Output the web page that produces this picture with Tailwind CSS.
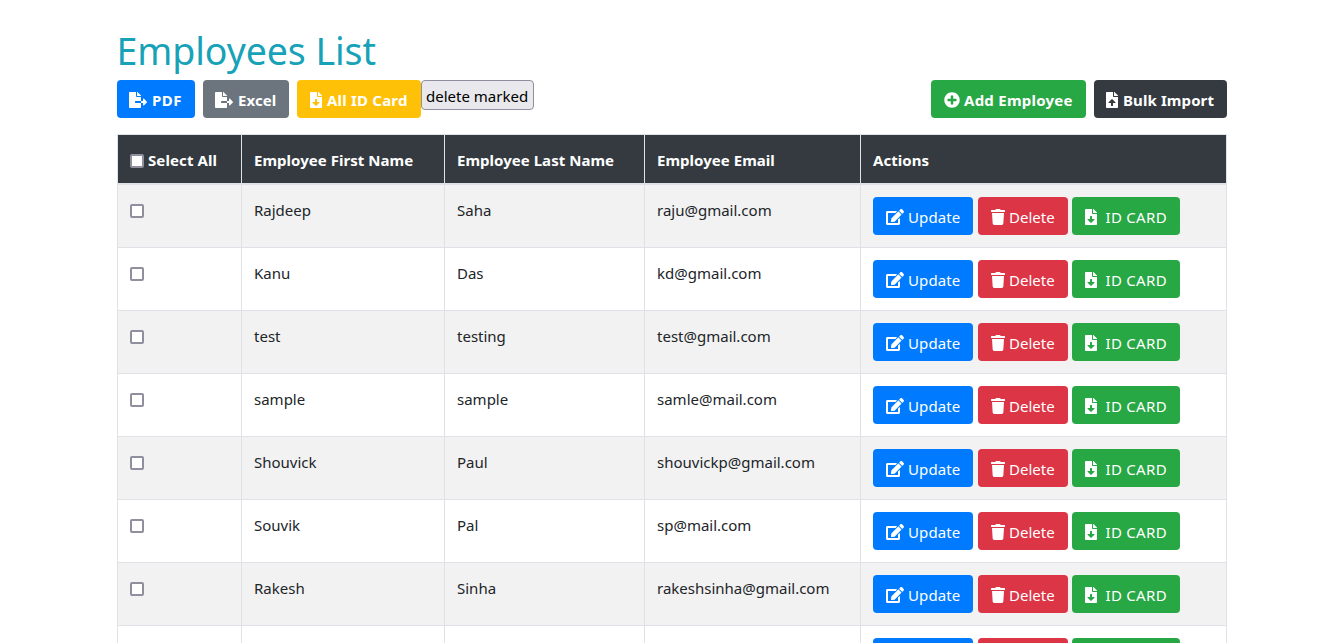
<!DOCTYPE html>
<html lang="en">
<head>
<meta charset="utf-8">
<title>Employees List</title>
<script src="https://cdn.jsdelivr.net/npm/@tailwindcss/browser@4"></script>
</head>
<body class="h-[643px] overflow-hidden bg-white font-['Noto_Sans',sans-serif] text-[15px] leading-6 text-[#212529]">
<svg class="hidden">
  <symbol id="export" viewBox="0 0 576 512"><path d="M384 121.9c0-6.3-2.5-12.4-7-16.9L279.1 7c-4.5-4.5-10.6-7-17-7H256v128h128zM571 308l-95.7-96.4c-10.1-10.1-27.4-3-27.4 11.3V288h-64v64h64v65.2c0 14.3 17.3 21.4 27.4 11.3L571 332c6.6-6.6 6.6-17.4 0-24zm-379 28v-32c0-8.8 7.2-16 16-16h176V160H248c-13.2 0-24-10.8-24-24V0H24C10.7 0 0 10.7 0 24v464c0 13.3 10.7 24 24 24h336c13.3 0 24-10.7 24-24V352H208c-8.8 0-16-7.2-16-16z"/></symbol>
  <symbol id="download" viewBox="0 0 384 512"><path d="M224 136V0H24C10.7 0 0 10.7 0 24v464c0 13.3 10.7 24 24 24h336c13.3 0 24-10.7 24-24V160H248c-13.2 0-24-10.8-24-24zm76.45 211.36l-96.42 95.7c-6.65 6.61-17.39 6.61-24.04 0l-96.42-95.7C73.42 337.29 80.54 320 94.82 320H160v-80c0-8.84 7.16-16 16-16h32c8.84 0 16 7.16 16 16v80h65.18c14.28 0 21.4 17.29 11.27 27.36zM377 105L279.1 7c-4.5-4.5-10.6-7-17-7H256v128h128v-6.1c0-6.3-2.5-12.4-7-16.9z"/></symbol>
  <symbol id="upload" viewBox="0 0 384 512"><path d="M224 136V0H24C10.7 0 0 10.7 0 24v464c0 13.3 10.7 24 24 24h336c13.3 0 24-10.7 24-24V160H248c-13.2 0-24-10.8-24-24zm65.18 216.01H224v80c0 8.84-7.16 16-16 16h-32c-8.84 0-16-7.16-16-16v-80H94.82c-14.28 0-21.41-17.29-11.27-27.36l96.42-95.7c6.65-6.61 17.39-6.61 24.04 0l96.42 95.7c10.15 10.07 3.03 27.36-11.25 27.36zM377 105L279.1 7c-4.5-4.5-10.6-7-17-7H256v128h128v-6.1c0-6.3-2.5-12.4-7-16.9z"/></symbol>
  <symbol id="plus" viewBox="0 0 512 512"><path d="M256 8C119 8 8 119 8 256s111 248 248 248 248-111 248-248S393 8 256 8zm144 276c0 6.6-5.4 12-12 12h-92v92c0 6.6-5.4 12-12 12h-56c-6.6 0-12-5.4-12-12v-92h-92c-6.6 0-12-5.4-12-12v-56c0-6.6 5.4-12 12-12h92v-92c0-6.6 5.4-12 12-12h56c6.6 0 12 5.4 12 12v92h92c6.6 0 12 5.4 12 12v56z"/></symbol>
  <symbol id="edit" viewBox="0 0 576 512"><path d="M402.6 83.2l90.2 90.2c3.8 3.8 3.8 10 0 13.8L274.4 405.6l-92.8 10.3c-12.4 1.4-22.9-9.1-21.5-21.5l10.3-92.8L388.8 83.2c3.8-3.8 10-3.8 13.8 0zm162-22.9l-48.8-48.8c-15.2-15.2-39.9-15.2-55.2 0l-35.4 35.4c-3.8 3.8-3.8 10 0 13.8l90.2 90.2c3.8 3.8 10 3.8 13.8 0l35.4-35.4c15.2-15.3 15.2-40 0-55.2zM384 346.2V448H64V128h229.8c3.2 0 6.2-1.3 8.5-3.5l40-40c7.6-7.6 2.2-20.5-8.5-20.5H48C21.5 64 0 85.5 0 112v352c0 26.5 21.5 48 48 48h352c26.5 0 48-21.5 48-48V306.2c0-10.7-12.9-16-20.5-8.5l-40 40c-2.2 2.3-3.5 5.3-3.5 8.5z"/></symbol>
  <symbol id="trash" viewBox="0 0 448 512"><path d="M432 32H312l-9.4-18.7A24 24 0 0 0 281.1 0H166.8a23.72 23.72 0 0 0-21.4 13.3L136 32H16A16 16 0 0 0 0 48v32a16 16 0 0 0 16 16h416a16 16 0 0 0 16-16V48a16 16 0 0 0-16-16zM53.2 467a48 48 0 0 0 47.9 45h245.8a48 48 0 0 0 47.9-45L416 128H32z"/></symbol>
</svg>

<main class="ml-[117px] w-[1110px] pt-[27px]">
  <h2 class="-ml-[0.5px] mb-[5px] h-12 text-[37.5px] leading-12 tracking-[-0.08px] text-[#17a2b8]">Employees List</h2>
  <div class="mb-4 flex h-[38px] items-start font-bold whitespace-nowrap text-white [&>a]:flex [&>a]:h-[38px] [&>a]:items-start [&>a]:rounded [&>a]:pt-2 [&_svg]:mt-1 [&_svg]:h-4 [&_svg]:fill-current">
    <a class="mr-2 w-[78px] bg-[#007bff] pl-3"><svg class="mr-[5px] w-[18px]"><use href="#export"/></svg><span class="tracking-[0.5px]">PDF</span></a>
    <a class="mr-2 w-[86px] bg-[#6c757d] pl-3"><svg class="mr-[5px] w-[18px]"><use href="#export"/></svg><span class="tracking-[0.1px]">Excel</span></a>
    <a class="w-[124px] bg-[#ffc107] pl-[13px]"><svg class="mr-[5px] w-3"><use href="#download"/></svg><span class="tracking-[0.2px]">All ID Card</span></a>
    <button class="h-[30px] w-[113px] rounded border border-[#8f8f9d] bg-[#e9e9ed] pt-px pl-1 text-left font-normal text-black"><span class="block leading-6">delete marked</span></button>
    <a class="mr-2 ml-auto w-[155px] bg-[#28a745] pl-[13px]"><svg class="mr-1 w-4"><use href="#plus"/></svg><span class="tracking-[0.25px]">Add Employee</span></a>
    <a class="w-[133px] bg-[#343a40] pl-3"><svg class="mr-[5px] w-3"><use href="#upload"/></svg><span class="tracking-[0.1px]">Bulk Import</span></a>
  </div>
  <table class="w-[1110px] table-fixed border-separate border-spacing-0 border-t border-l border-[#dee2e6]">
    <colgroup><col class="w-[124px]"><col class="w-[203px]"><col class="w-[200px]"><col class="w-[216px]"><col class="w-[366px]"></colgroup>
    <thead>
      <tr class="h-[50px] bg-[#343a40] text-left tracking-[0.03px] whitespace-nowrap text-white [&>th]:border-r [&>th]:border-b-2 [&>th]:border-[#dee2e6] [&>th]:px-3 [&>th]:pt-[13px] [&>th]:pb-0 [&>th]:align-top">
        <th><div class="flex"><i class="mt-[6px] mr-1 size-[14px] rounded-[2px] border-2 border-[#8f8f9d] bg-white"></i><span class="tracking-[0.1px]">Select All</span></div></th>
        <th>Employee First Name</th>
        <th>Employee Last Name</th>
        <th>Employee Email</th>
        <th>Actions</th>
      </tr>
    </thead>
    <tbody id="rows"></tbody>
  </table>
</main>

<template id="row">
  <tr class="h-[63px] odd:bg-[#f2f2f2] [&>td]:border-r [&>td]:border-b [&>td]:border-[#dee2e6] [&>td]:px-3 [&>td]:pt-3 [&>td]:pb-0 [&>td]:align-top">
    <td><i class="mt-[7px] block size-[14px] rounded-[2px] border-2 border-[#8f8f9d] bg-white"></i></td>
    <td><span class="name block pt-px"></span></td>
    <td><span class="name block pt-px"></span></td>
    <td><span class="name block pt-px"></span></td>
    <td>
      <div class="flex whitespace-nowrap text-white [&>a]:flex [&>a]:h-[38px] [&>a]:items-start [&>a]:rounded [&>a]:pt-2 [&_svg]:mt-1 [&_svg]:h-4 [&_svg]:fill-current">
        <a class="mr-[5px] w-[100px] bg-[#007bff] pl-[13px]"><svg class="mr-[4px] w-[18px]"><use href="#edit"/></svg><span class="tracking-[0.1px]">Update</span></a>
        <a class="mr-1 w-[90px] bg-[#dc3545] pl-[12.5px]"><svg class="mr-[4.5px] w-[14px]"><use href="#trash"/></svg><span>Delete</span></a>
        <a class="w-[108px] bg-[#28a745] pl-[12.5px]"><svg class="mr-[9px] w-3"><use href="#download"/></svg><span class="tracking-[0.3px]">ID CARD</span></a>
      </div>
    </td>
  </tr>
</template>
<script>
  const employees = [
    ['Rajdeep', 'Saha', 'raju@gmail.com'],
    ['Kanu', 'Das', 'kd@gmail.com'],
    ['test', 'testing', 'test@gmail.com'],
    ['sample', 'sample', 'samle@mail.com'],
    ['Shouvick', 'Paul', 'shouvickp@gmail.com'],
    ['Souvik', 'Pal', 'sp@mail.com'],
    ['Rakesh', 'Sinha', 'rakeshsinha@gmail.com'],
    ['', '', ''],
  ];
  for (const e of employees) {
    const r = document.getElementById('row').content.cloneNode(true);
    r.querySelectorAll('.name').forEach((s, i) => { s.textContent = e[i]; });
    document.getElementById('rows').append(r);
  }
</script>
</body>
</html>
